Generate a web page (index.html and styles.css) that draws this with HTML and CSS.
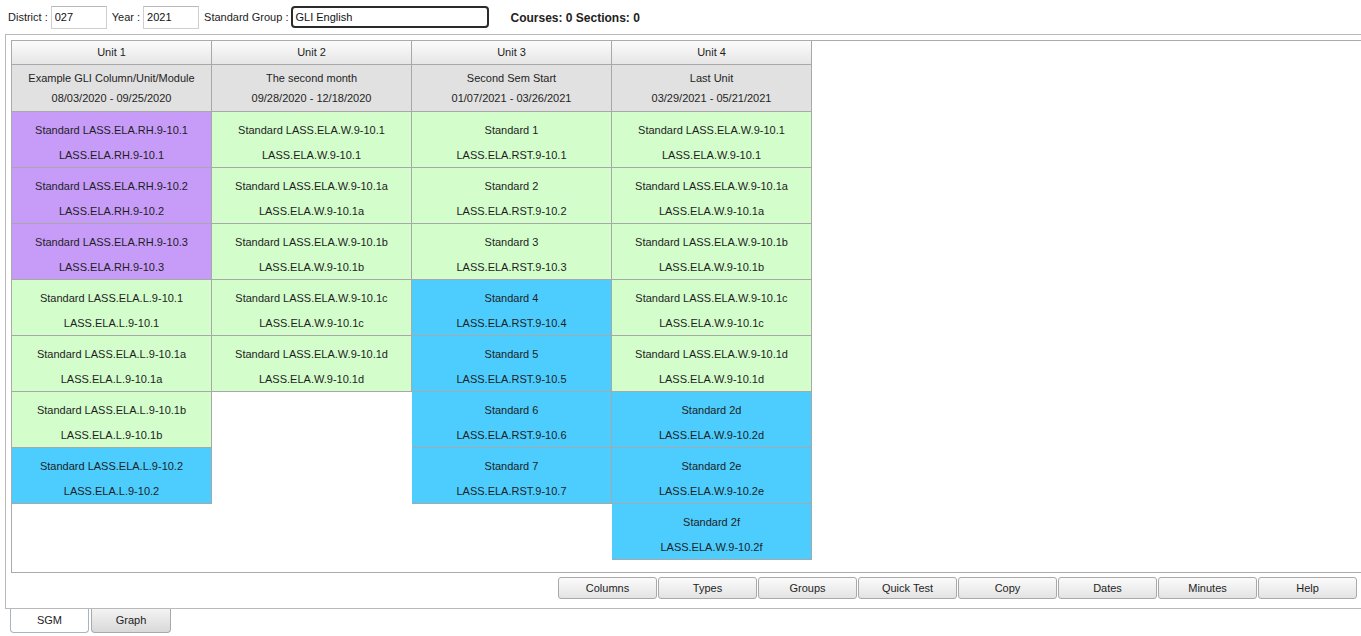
FILE: index.html
```html
<!DOCTYPE html>
<html>
<head>
<meta charset="utf-8">
<link rel="stylesheet" href="styles.css">
</head>
<body>
<div class="topbar">
  <span class="lbl">District :</span><input class="field f-district" value="027">
  <span class="lbl">Year :</span><input class="field f-year" value="2021">
  <span class="lbl">Standard Group :</span><input class="field f-group" value="GLI English">
  <span class="counts">Courses: 0 Sections: 0</span>
</div>
<div class="outer">
  <div class="inner">
    <div class="board">
      <div class="col">
        <div class="unit">Unit 1</div>
        <div class="info"><div>Example GLI Column/Unit/Module</div><div>08/03/2020 - 09/25/2020</div></div>
        <div class="cell purple"><div>Standard LASS.ELA.RH.9-10.1</div><div>LASS.ELA.RH.9-10.1</div></div>
        <div class="cell purple"><div>Standard LASS.ELA.RH.9-10.2</div><div>LASS.ELA.RH.9-10.2</div></div>
        <div class="cell purple"><div>Standard LASS.ELA.RH.9-10.3</div><div>LASS.ELA.RH.9-10.3</div></div>
        <div class="cell green"><div>Standard LASS.ELA.L.9-10.1</div><div>LASS.ELA.L.9-10.1</div></div>
        <div class="cell green"><div>Standard LASS.ELA.L.9-10.1a</div><div>LASS.ELA.L.9-10.1a</div></div>
        <div class="cell green"><div>Standard LASS.ELA.L.9-10.1b</div><div>LASS.ELA.L.9-10.1b</div></div>
        <div class="cell blue"><div>Standard LASS.ELA.L.9-10.2</div><div>LASS.ELA.L.9-10.2</div></div>
      </div>
      <div class="col">
        <div class="unit">Unit 2</div>
        <div class="info"><div>The second month</div><div>09/28/2020 - 12/18/2020</div></div>
        <div class="cell green"><div>Standard LASS.ELA.W.9-10.1</div><div>LASS.ELA.W.9-10.1</div></div>
        <div class="cell green"><div>Standard LASS.ELA.W.9-10.1a</div><div>LASS.ELA.W.9-10.1a</div></div>
        <div class="cell green"><div>Standard LASS.ELA.W.9-10.1b</div><div>LASS.ELA.W.9-10.1b</div></div>
        <div class="cell green"><div>Standard LASS.ELA.W.9-10.1c</div><div>LASS.ELA.W.9-10.1c</div></div>
        <div class="cell green"><div>Standard LASS.ELA.W.9-10.1d</div><div>LASS.ELA.W.9-10.1d</div></div>
      </div>
      <div class="col">
        <div class="unit">Unit 3</div>
        <div class="info"><div>Second Sem Start</div><div>01/07/2021 - 03/26/2021</div></div>
        <div class="cell green"><div>Standard 1</div><div>LASS.ELA.RST.9-10.1</div></div>
        <div class="cell green"><div>Standard 2</div><div>LASS.ELA.RST.9-10.2</div></div>
        <div class="cell green"><div>Standard 3</div><div>LASS.ELA.RST.9-10.3</div></div>
        <div class="cell blue"><div>Standard 4</div><div>LASS.ELA.RST.9-10.4</div></div>
        <div class="cell blue"><div>Standard 5</div><div>LASS.ELA.RST.9-10.5</div></div>
        <div class="cell blue"><div>Standard 6</div><div>LASS.ELA.RST.9-10.6</div></div>
        <div class="cell blue"><div>Standard 7</div><div>LASS.ELA.RST.9-10.7</div></div>
      </div>
      <div class="col">
        <div class="unit">Unit 4</div>
        <div class="info"><div>Last Unit</div><div>03/29/2021 - 05/21/2021</div></div>
        <div class="cell green"><div>Standard LASS.ELA.W.9-10.1</div><div>LASS.ELA.W.9-10.1</div></div>
        <div class="cell green"><div>Standard LASS.ELA.W.9-10.1a</div><div>LASS.ELA.W.9-10.1a</div></div>
        <div class="cell green"><div>Standard LASS.ELA.W.9-10.1b</div><div>LASS.ELA.W.9-10.1b</div></div>
        <div class="cell green"><div>Standard LASS.ELA.W.9-10.1c</div><div>LASS.ELA.W.9-10.1c</div></div>
        <div class="cell green"><div>Standard LASS.ELA.W.9-10.1d</div><div>LASS.ELA.W.9-10.1d</div></div>
        <div class="cell blue"><div>Standard 2d</div><div>LASS.ELA.W.9-10.2d</div></div>
        <div class="cell blue"><div>Standard 2e</div><div>LASS.ELA.W.9-10.2e</div></div>
        <div class="cell blue"><div>Standard 2f</div><div>LASS.ELA.W.9-10.2f</div></div>
      </div>
    </div>
  </div>
  <div class="buttons">
    <button class="btn">Columns</button>
    <button class="btn">Types</button>
    <button class="btn">Groups</button>
    <button class="btn">Quick Test</button>
    <button class="btn">Copy</button>
    <button class="btn">Dates</button>
    <button class="btn">Minutes</button>
    <button class="btn">Help</button>
  </div>
</div>
<div class="tabs">
  <div class="tab active">SGM</div>
  <div class="tab">Graph</div>
</div>
</body>
</html>
```
FILE: styles.css
```css
html, body {
  margin: 0;
  padding: 0;
  overflow: hidden;
  background: #ffffff;
}
body {
  font-family: "Liberation Sans", Arial, sans-serif;
  font-size: 11px;
  color: #1e1e1e;
  width: 1361px;
  height: 636px;
}
.topbar {
  display: flex;
  align-items: center;
  height: 34px;
  padding-left: 8px;
  box-sizing: border-box;
}
.lbl {
  margin-right: 3px;
  color: #222;
}
.field {
  box-sizing: border-box;
  height: 23px;
  margin: 0 5px 0 0;
  padding: 0 0 0 3px;
  border: 1px solid #cfcfcf;
  border-top-color: #b8b8b8;
  font-family: "Liberation Sans", Arial, sans-serif;
  font-size: 11px;
  color: #111;
  background: #fff;
  outline: none;
}
.f-district, .f-year {
  width: 56px;
}
.f-group {
  width: 198px;
  height: 22px;
  border: 2px solid #2a2a2a;
  border-radius: 4px;
  padding-left: 2px;
  margin-right: 21px;
}
.counts {
  font-weight: bold;
  font-size: 12px;
  color: #222;
  margin-top: 2px;
}
.outer {
  margin-left: 5px;
  width: 1370px;
  height: 575px;
  box-sizing: border-box;
  border: 1px solid #b9b9b9;
  padding: 5px;
}
.inner {
  width: 1370px;
  height: 533px;
  box-sizing: border-box;
  border: 1px solid #ababab;
}
.board {
  display: flex;
  align-items: flex-start;
}
.col {
  width: 200px;
  display: flex;
  flex-direction: column;
}
.unit, .info, .cell {
  border-right: 1px solid #a8a8a8;
  border-bottom: 1px solid #a8a8a8;
  text-align: center;
}
.unit {
  height: 23px;
  line-height: 23px;
  background: linear-gradient(#fbfbfb, #e6e6e6);
}
.info {
  height: 47px;
  box-sizing: border-box;
  padding-top: 3px;
  line-height: 20px;
  background: #e1e1e1;
}
.cell {
  height: 56px;
  box-sizing: border-box;
  padding-top: 6px;
  line-height: 25px;
}
.purple { background: #c79cf9; }
.green { background: #d4fdcc; }
.blue { background: #4dcdfe; }
.buttons {
  display: flex;
  justify-content: flex-end;
  width: 1347px;
  margin-top: 4px;
}
.btn {
  width: 99px;
  height: 22px;
  margin-right: 1px;
  padding: 0;
  border: 1px solid #a9a9a9;
  border-radius: 3px;
  background: linear-gradient(#fbfbfb, #e3e3e3);
  font-family: "Liberation Sans", Arial, sans-serif;
  font-size: 11px;
  color: #1e1e1e;
}
.tabs {
  display: flex;
  margin-left: 10px;
  gap: 2px;
}
.tab {
  width: 80px;
  height: 24px;
  box-sizing: border-box;
  line-height: 23px;
  text-align: center;
  border: 1px solid #a9a9a9;
  border-top: none;
  border-radius: 0 0 4px 4px;
  background: linear-gradient(#f3f3f3, #d9d9d9);
  color: #222;
}
.tab.active {
  width: 79px;
  background: #ffffff;
  border-color: #a7b4c4;
}
```
